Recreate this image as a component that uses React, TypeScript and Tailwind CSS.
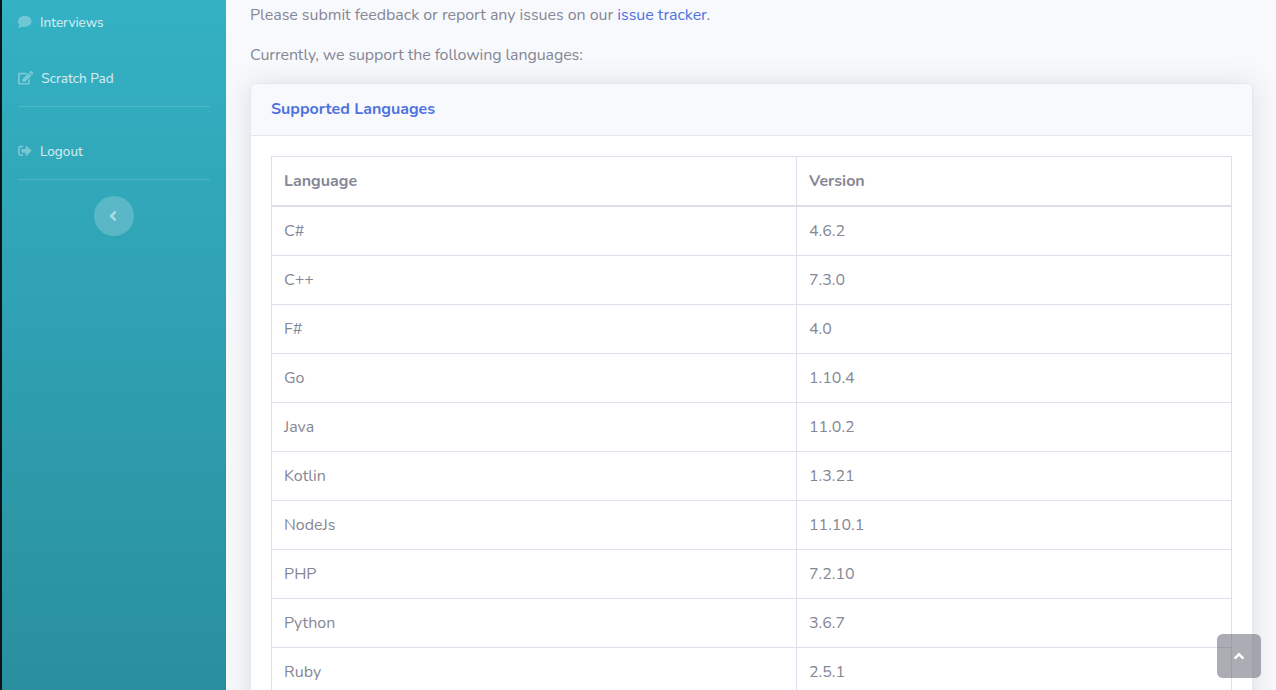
import { FaAngleLeft, FaAngleUp, FaComment, FaEdit, FaSignOutAlt } from "react-icons/fa";

const languages = [
  ["C#", "4.6.2"],
  ["C++", "7.3.0"],
  ["F#", "4.0"],
  ["Go", "1.10.4"],
  ["Java", "11.0.2"],
  ["Kotlin", "1.3.21"],
  ["NodeJs", "11.10.1"],
  ["PHP", "7.2.10"],
  ["Python", "3.6.7"],
  ["Ruby", "2.5.1"],
];

function Sidebar() {
  return (
    <nav className="flex w-[226px] shrink-0 flex-col border-l-2 border-[#0b1517] bg-linear-to-b from-[#34b1c4] to-[#298f9e] px-4 text-[13.6px] leading-5 text-white/80">
      <a className="mt-[11px] flex items-center">
        <FaComment className="mr-[8.4px] size-[13.6px] text-white/30" />
        <span className="pt-0.5">Interviews</span>
      </a>
      <a className="mt-[34px] flex items-center">
        <FaEdit className="mr-2 h-[13.6px] w-[15.3px] text-white/35" />
        <span className="pt-0.5">Scratch Pad</span>
      </a>
      <hr className="mt-[17px] border-white/15" />
      <a className="mt-[33px] flex items-center">
        <FaSignOutAlt className="mr-[8.4px] size-[13.6px] text-white/35" />
        <span className="pt-0.5">Logout</span>
      </a>
      <hr className="mt-[17px] border-white/15" />
      <button className="mt-4 flex size-10 items-center justify-center self-center rounded-full bg-white/20 pr-0.5 text-white/50">
        <FaAngleLeft className="size-4" />
      </button>
    </nav>
  );
}

export default function App() {
  return (
    <div className="relative flex h-[690px] w-[1276px] overflow-hidden bg-[#f8f9fc] font-['Nunito','Lato',sans-serif] text-base text-[#858796] antialiased">
      <Sidebar />
      <main className="flex flex-1 flex-col px-6">
        <p className="mt-[3px] leading-6 tracking-[-0.035px]">
          Please submit feedback or report any issues on our <a className="text-[#4e73df]">issue tracker</a>.
        </p>
        <p className="mt-4 leading-6 tracking-[-0.11px]">Currently, we support the following languages:</p>
        <section className="mt-4 w-[1003px] shrink-0 rounded-[5.6px] border border-[#e3e6f0] bg-white shadow-[0_2.4px_28px_0_rgba(58,59,69,0.15)]">
          <h6 className="h-[52px] rounded-t-[5px] border-b border-[#e3e6f0] bg-[#f8f9fc] px-5 pt-[13px] leading-6 font-bold text-[#4e73df]">
            Supported Languages
          </h6>
          <div className="p-5">
            <div className="border border-[#dddfeb]">
              <div className="flex h-[50px] border-b-2 border-[#dddfeb] font-bold">
                <div className="w-[525px] border-r border-[#dddfeb] px-3 pt-3">Language</div>
                <div className="px-3 pt-3">Version</div>
              </div>
              {languages.map(([name, version]) => (
                <div key={name} className="flex h-[49px] border-b border-[#dddfeb]">
                  <div className="w-[525px] border-r border-[#dddfeb] px-3 pt-3">{name}</div>
                  <div className="px-3 pt-3">{version}</div>
                </div>
              ))}
            </div>
          </div>
        </section>
      </main>
      <button className="absolute right-[15px] bottom-3 flex size-11 items-center justify-center rounded-[5.6px] bg-[#5a5c69]/50 text-white">
        <FaAngleUp className="size-4" />
      </button>
    </div>
  );
}
